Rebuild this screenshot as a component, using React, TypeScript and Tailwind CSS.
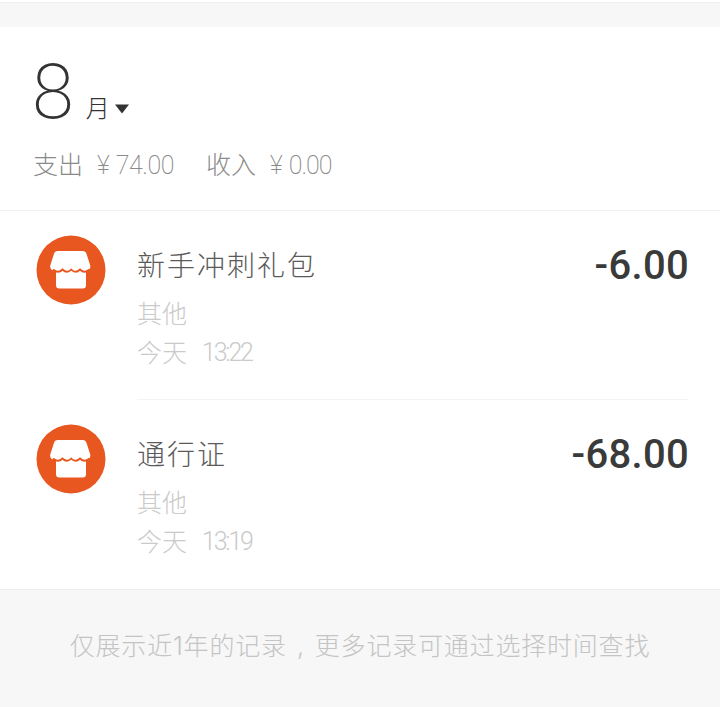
const CJK = `font-['Inter','Noto_Sans_CJK_SC',sans-serif]`;

function StoreIcon() {
  return (
    <svg width="70" height="70" viewBox="0 0 70 70" className="shrink-0">
      <circle cx="35" cy="35" r="34.5" fill="#e8571f" />
      <path
        d="M23.500 16h23c2 0 3.300.8 3.900 2.500l3.700 11.500c.9 2.900-.8 5.300-3.100 5.500-1.600.1-2.900-.5-4-1.700-1.200 1.200-2.500 1.900-4.200 1.900s-3.300-.7-4.500-1.900c-1.200 1.200-2.600 1.900-4.300 1.900s-3.100-.7-4.300-1.900c-1.200 1.200-2.600 1.900-4.300 1.900s-3-.7-4.200-1.900c-1 1.100-2.200 1.800-3.700 1.700-2.300-.2-4-2.600-3.100-5.500l3.700-11.500c.6-1.700 1.900-2.500 3.900-2.500z"
        fill="#fff"
      />
      <path d="M20 33h30v17c0 2.500-1 3.500-3.500 3.500h-23c-2.500 0-3.500-1-3.500-3.500z" fill="#fff" />
      <path d="M17 34.500Q22 39 26.500 34.500Q31 39 35.200 34.500Q39.500 39 44 34.500Q48.500 39 53.500 34.500" fill="none" stroke="#e8571f" strokeWidth="1.800" />
    </svg>
  );
}

function Row({ title, time, amount, divider }: { title: string; time: string; amount: string; divider?: boolean }) {
  return (
    <div className="flex h-[189px] pl-[36px]">
      <div className="pt-[24px]">
        <StoreIcon />
      </div>
      <div className={`ml-[31px] mr-[32px] flex flex-1 justify-between ${divider ? "border-b border-[#f3f3f3]" : ""}`}>
        <div className="flex flex-col">
          <div className="mt-[35px] h-[40px] text-[28px] leading-[40px] tracking-[2px] text-[#5a5a5a] font-light">{title}</div>
          <div className="mt-[8px] h-[40px] text-[25px] leading-[40px] text-[#cacaca] font-light">其他</div>
          <div className="-mt-px flex h-[40px] items-center text-[25px] leading-[40px] text-[#cacaca] font-light">
            <span>今天</span>
            <span className="ml-[15px] font-['Roboto',sans-serif] font-light tracking-[-2.2px]">{time}</span>
          </div>
        </div>
        <div className="mt-[31px] -mr-px h-[48px] font-['Roboto',sans-serif] text-[40px] leading-[48px] font-medium tracking-[0.3px] text-[#3a3a3a]">
          {amount}
        </div>
      </div>
    </div>
  );
}

export default function App() {
  return (
    <div className={`h-[707px] w-[720px] overflow-hidden bg-white ${CJK}`}>
      <div className="mt-[2px] h-[25px] border-t border-[#eeeeee] bg-[#f7f7f7]" />
      <div className="h-[184px] border-b border-[#f1f1f1] pl-[33px]">
        <div className="flex h-[105px] items-start pt-[27px]">
          <span className="-ml-px font-['Roboto',sans-serif] text-[76px] leading-[76px] font-extralight text-[#333333]">8</span>
          <span className="ml-[12px] mt-[37px] text-[24px] leading-[36px] font-light text-[#333333]">月</span>
          <svg width="16" height="10" viewBox="0 0 16 10" className="ml-[4px] mt-[50px]">
            <path d="M1 .5h14L8 9.500z" fill="#333333" />
          </svg>
        </div>
        <div className="mt-[16px] flex h-[36px] items-center text-[25px] font-light text-[#8a8a8a]">
          <span>支出</span>
          <span className="ml-[14px] font-['Roboto',sans-serif] font-extralight">¥</span>
          <span className="ml-[6px] font-['Roboto',sans-serif] font-extralight tracking-[-0.5px]">74.00</span>
          <span className="ml-[32px]">收入</span>
          <span className="ml-[14px] font-['Roboto',sans-serif] font-extralight">¥</span>
          <span className="ml-[6px] font-['Roboto',sans-serif] font-extralight tracking-[-1px]">0.00</span>
        </div>
      </div>
      <Row title="新手冲刺礼包" time="13:22" amount="-6.00" divider />
      <Row title="通行证" time="13:19" amount="-68.00" />
      <div className="flex h-[118px] items-start justify-center border-t border-[#eeeeee] bg-[#f7f7f7] pt-[36px] text-[25px] leading-[40px] font-light tracking-[0.8px] text-[#c4c4c4]">
        <span>仅展示近1年的记录</span>
        <span className="w-[28px] text-center">,</span>
        <span>更多记录可通过选择时间查找</span>
      </div>
    </div>
  );
}
